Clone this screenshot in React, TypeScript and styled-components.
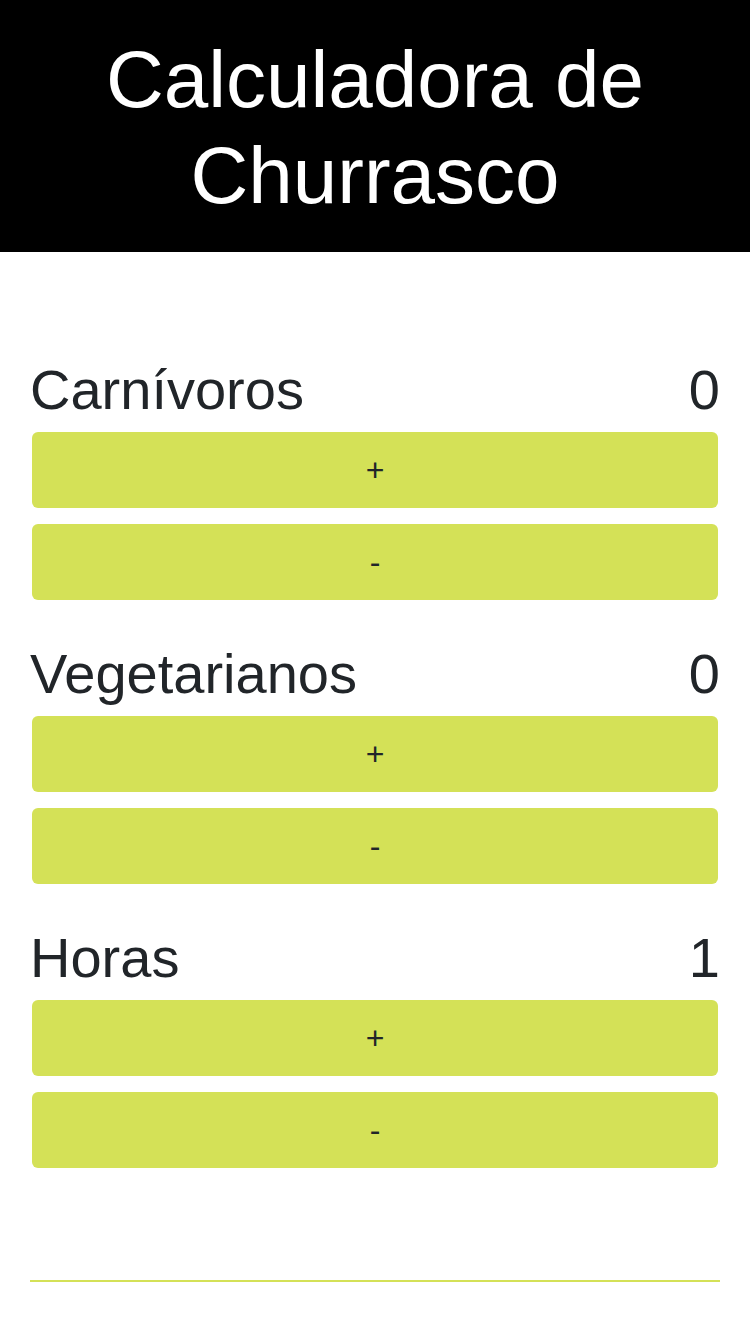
import React, { useState } from "react";
import styled, { createGlobalStyle } from "styled-components";

const GlobalStyle = createGlobalStyle`
  html, body {
    margin: 0;
    padding: 0;
    background: #ffffff;
    font-family: "Liberation Sans", Arial, Helvetica, sans-serif;
    color: #212529;
  }
  * { box-sizing: border-box; }
`;

const Header = styled.header`
  background: #000000;
  color: #ffffff;
  padding: 32px 20px 28px;
  text-align: center;
`;

const Title = styled.h1`
  margin: 0;
  font-size: 80px;
  line-height: 96px;
  font-weight: 400;
`;

const Main = styled.main`
  padding: 96px 30px 0;
  display: flex;
  flex-direction: column;
  gap: 32px;
`;

const Section = styled.section`
  display: flex;
  flex-direction: column;
`;

const LabelRow = styled.div`
  display: flex;
  justify-content: space-between;
  align-items: baseline;
  font-size: 56px;
  line-height: 84px;
  height: 84px;
`;

const Buttons = styled.div`
  display: flex;
  flex-direction: column;
  gap: 16px;
  padding: 0 2px;
`;

const StepButton = styled.button`
  display: block;
  width: 100%;
  height: 76px;
  border: none;
  border-radius: 6px;
  background: #d4e157;
  color: #212529;
  font-family: "Liberation Sans", Arial, Helvetica, sans-serif;
  font-size: 32px;
  line-height: 48px;
  padding: 14px 0;
  cursor: pointer;
`;

const Divider = styled.hr`
  margin: 112px 30px 0;
  border: none;
  border-top: 2px solid #d4e157;
  height: 0;
`;

const Counter: React.FC<{ label: string; value: number; onChange: (v: number) => void; min?: number }> = ({
  label,
  value,
  onChange,
  min = 0,
}) => (
  <Section>
    <LabelRow>
      <span>{label}</span>
      <span>{value}</span>
    </LabelRow>
    <Buttons>
      <StepButton onClick={() => onChange(value + 1)}>+</StepButton>
      <StepButton onClick={() => onChange(Math.max(min, value - 1))}>-</StepButton>
    </Buttons>
  </Section>
);

export default function App() {
  const [carn, setCarn] = useState(0);
  const [veg, setVeg] = useState(0);
  const [horas, setHoras] = useState(1);
  return (
    <>
      <GlobalStyle />
      <Header>
        <Title>Calculadora de Churrasco</Title>
      </Header>
      <Main>
        <Counter label="Carnívoros" value={carn} onChange={setCarn} />
        <Counter label="Vegetarianos" value={veg} onChange={setVeg} />
        <Counter label="Horas" value={horas} onChange={setHoras} min={1} />
      </Main>
      <Divider />
    </>
  );
}
